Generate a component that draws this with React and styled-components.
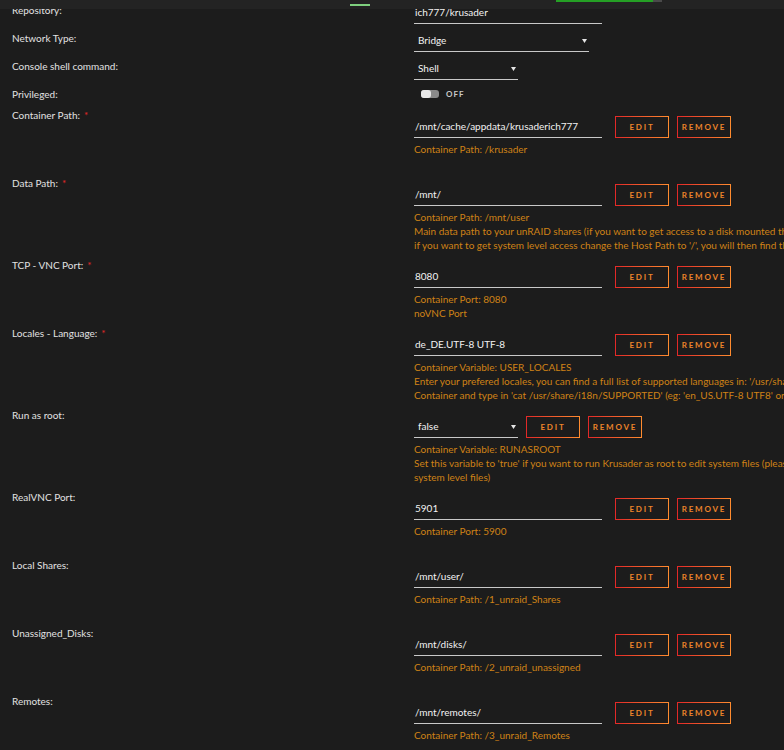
import React from "react"
import styled, { createGlobalStyle } from "styled-components"

const GlobalStyle = createGlobalStyle`
  html, body {
    margin: 0;
    padding: 0;
    background: #1c1c1c;
    overflow: hidden;
  }
  body {
    font-family: Lato, "Liberation Sans", sans-serif;
    font-size: 10px;
    color: #e6e6e6;
  }
`

const configs = [
  {
    label: "Container Path:",
    required: true,
    value: "/mnt/cache/appdata/krusaderich777",
    desc: ["Container Path: /krusader"],
  },
  {
    label: "Data Path:",
    required: true,
    value: "/mnt/",
    desc: [
      "Container Path: /mnt/user",
      "Main data path to your unRAID shares (if you want to get access to a disk mounted through Unassigned Devices use '/mnt/disks/')",
      "if you want to get system level access change the Host Path to '/', you will then find the whole filesystem in the Container",
    ],
  },
  {
    label: "TCP - VNC Port:",
    required: true,
    value: "8080",
    desc: ["Container Port: 8080", "noVNC Port"],
  },
  {
    label: "Locales - Language:",
    required: true,
    value: "de_DE.UTF-8 UTF-8",
    desc: [
      "Container Variable: USER_LOCALES",
      "Enter your prefered locales, you can find a full list of supported languages in: '/usr/share/i18n/SUPPORTED' simply open up a Console from the",
      "Container and type in 'cat /usr/share/i18n/SUPPORTED' (eg: 'en_US.UTF-8 UTF8' or 'de_DE.UTF-8 UTF-8')",
    ],
  },
  {
    label: "Run as root:",
    select: true,
    value: "false",
    desc: [
      "Container Variable: RUNASROOT",
      "Set this variable to 'true' if you want to run Krusader as root to edit system files (please be careful, you can easily break your",
      "system level files)",
    ],
  },
  {
    label: "RealVNC Port:",
    value: "5901",
    desc: ["Container Port: 5900"],
  },
  {
    label: "Local Shares:",
    value: "/mnt/user/",
    desc: ["Container Path: /1_unraid_Shares"],
  },
  {
    label: "Unassigned_Disks:",
    value: "/mnt/disks/",
    desc: ["Container Path: /2_unraid_unassigned"],
  },
  {
    label: "Remotes:",
    value: "/mnt/remotes/",
    desc: ["Container Path: /3_unraid_Remotes"],
  },
]

const Arrow = () => (
  <svg width="5" height="4" viewBox="0 0 5 4">
    <path d="M0 0 L5 0 L2.5 4 Z" fill="#e6e6e6" />
  </svg>
)

const App = () => {
  return (
    <>
      <GlobalStyle />
      <TopBar>
        <TabMark />
        <Progress>
          <ProgressFill />
        </Progress>
      </TopBar>
      <Page>
        <SimpleRow>
          <Label>Repository:</Label>
          <TextInput>ich777/krusader</TextInput>
        </SimpleRow>
        <SimpleRow>
          <Label>Network Type:</Label>
          <Select width={175}>
            Bridge
            <Arrow />
          </Select>
        </SimpleRow>
        <SimpleRow>
          <Label>Console shell command:</Label>
          <Select width={104}>
            Shell
            <Arrow />
          </Select>
        </SimpleRow>
        <ToggleRow>
          <Label>Privileged:</Label>
          <ToggleWrap>
            <Switch>
              <Knob />
            </Switch>
            <SwitchText>OFF</SwitchText>
          </ToggleWrap>
        </ToggleRow>
        {configs.map((c, i) => (
          <ConfigRow key={i}>
            <Label>
              {c.label}
              {c.required && <Required>*</Required>}
            </Label>
            <ConfigBody>
              <Field>
                {c.select ? (
                  <Select width={104}>
                    {c.value}
                    <Arrow />
                  </Select>
                ) : (
                  <TextInput wide>{c.value}</TextInput>
                )}
                <Button>Edit</Button>
                <Button>Remove</Button>
              </Field>
              <Desc>
                {c.desc.map((line, j) => (
                  <div key={j}>{line}</div>
                ))}
              </Desc>
            </ConfigBody>
          </ConfigRow>
        ))}
      </Page>
    </>
  )
}

export default App

const TopBar = styled.div`
  position: fixed;
  top: 0;
  left: 0;
  right: 0;
  height: 9px;
  background: #232323;
  z-index: 10;
`

const TabMark = styled.div`
  position: absolute;
  left: 350px;
  top: 4px;
  width: 20px;
  height: 2px;
  background: #7fd07f;
`

const Progress = styled.div`
  position: absolute;
  left: 556px;
  top: 0;
  width: 106px;
  height: 2px;
  background: #4a4a4a;
`

const ProgressFill = styled.div`
  width: 97px;
  height: 100%;
  background: #25a025;
`

const Page = styled.div`
  padding: 2px 0 0 12px;
`

const Row = styled.div`
  display: grid;
  grid-template-columns: 402px 1fr;
  align-items: start;
`

const SimpleRow = styled(Row)`
  height: 28px;
`

const ToggleRow = styled(Row)`
  height: 21px;
`

const ConfigRow = styled(Row)`
  padding-bottom: 5px;
`

const Label = styled.div`
  line-height: 16px;
  color: #e2e2e2;
  white-space: nowrap;
`

const Required = styled.span`
  color: #e22828;
  margin-left: 4px;
`

const TextInput = styled.div`
  box-sizing: border-box;
  width: 188px;
  height: 22px;
  line-height: 21px;
  padding-left: 1px;
  border-bottom: 1px solid #c8c8c8;
  color: #f2f2f2;
  white-space: nowrap;
  margin-right: ${({ wide }) => (wide ? "5px" : "0")};
`

const Select = styled.div`
  box-sizing: border-box;
  width: ${({ width }) => width}px;
  height: 22px;
  padding: 0 2px 0 4px;
  display: flex;
  align-items: center;
  justify-content: space-between;
  border-bottom: 1px solid #c8c8c8;
  color: #f2f2f2;
  line-height: 21px;
`

const ToggleWrap = styled.div`
  display: flex;
  align-items: center;
  gap: 7px;
  padding: 3px 0 0 7px;
`

const Switch = styled.div`
  width: 18px;
  height: 8px;
  border-radius: 3px;
  background: #8a8a8a;
  display: flex;
`

const Knob = styled.div`
  width: 10px;
  height: 8px;
  border-radius: 3px;
  background: #e8e8e8;
`

const SwitchText = styled.span`
  font-size: 8px;
  font-weight: 700;
  letter-spacing: 1px;
  color: #c8c8c8;
`

const ConfigBody = styled.div`
  padding-top: 9px;
`

const Field = styled.div`
  display: flex;
  align-items: center;
  gap: 8px;
`

const Button = styled.div`
  box-sizing: border-box;
  width: 54px;
  height: 22px;
  display: flex;
  align-items: center;
  justify-content: center;
  border: 1px solid transparent;
  border-image: linear-gradient(90deg, #e22828, #ff8c2f) 1;
  font-size: 8px;
  font-weight: 700;
  letter-spacing: 1.8px;
  text-transform: uppercase;
  color: #ec842a;
`

const Desc = styled.div`
  margin-top: 4px;
  min-height: 28px;
  line-height: 14px;
  color: #cf8216;
  white-space: nowrap;
`
